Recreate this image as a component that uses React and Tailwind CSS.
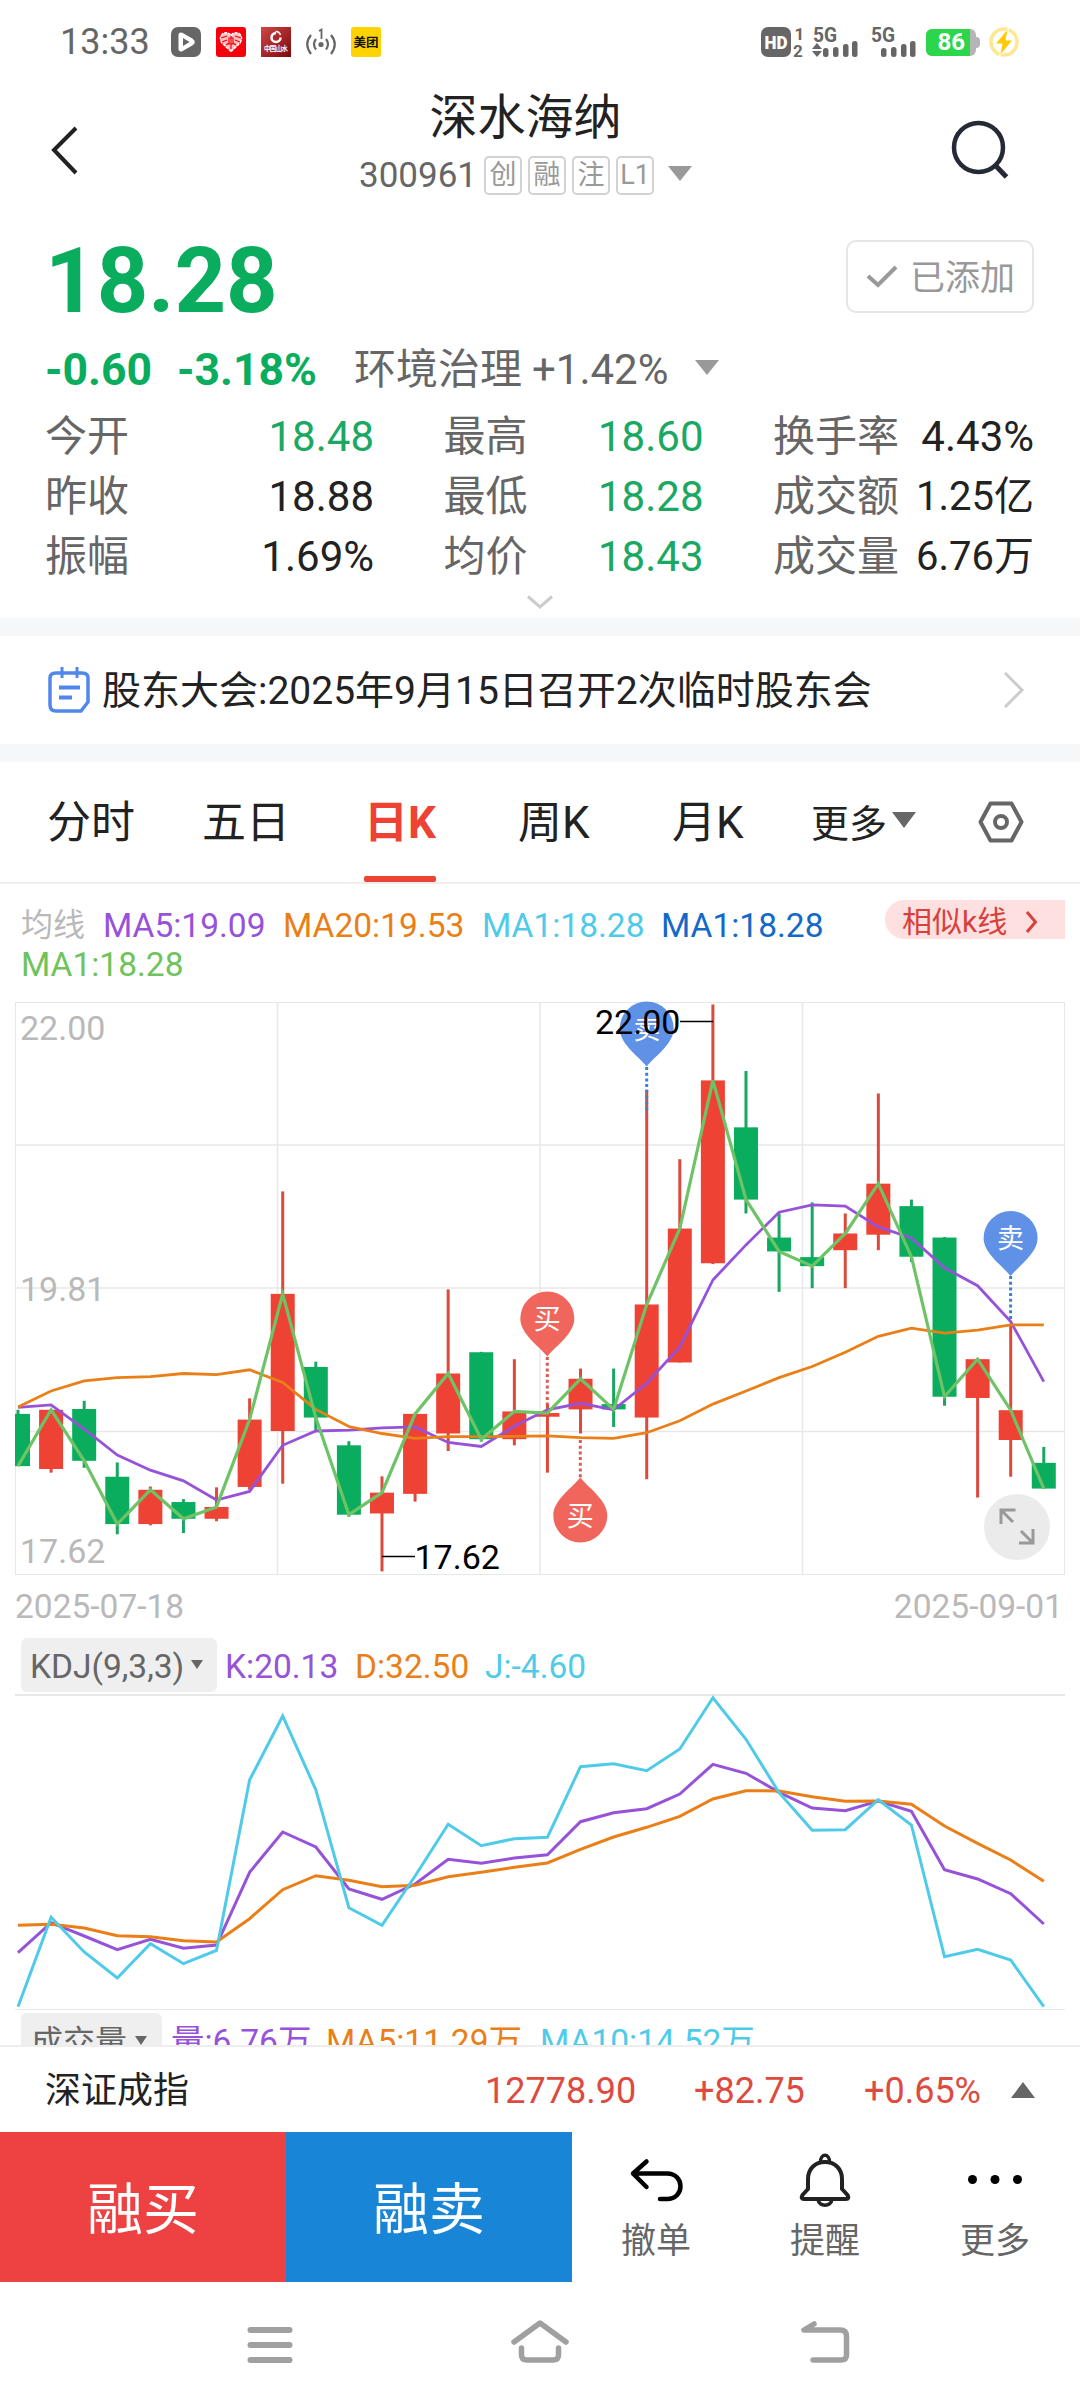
import React from "react";

const GREEN = "#09ad5d";
const RED = "#ee4234";
const PURPLE = "#9652d9";
const ORANGE = "#ea7f17";
const CYAN = "#4fcbe9";

// chart x position of the n-th trading day
const dayX = (i) => 18 + i * 33.09;

// price chart: [up, high, bodyTop, bodyBottom, low]
const candles = [
  [0, 1004, 1014, 1142, 1142],
  [1, 1004, 1004, 1149, 1158],
  [0, 982, 1002, 1129, 1146],
  [0, 1133, 1168, 1284, 1309],
  [1, 1192, 1200, 1284, 1287],
  [0, 1223, 1230, 1271, 1306],
  [1, 1194, 1242, 1271, 1277],
  [1, 976, 1028, 1193, 1200],
  [1, 469, 720, 1056, 1185],
  [0, 886, 899, 1023, 1056],
  [0, 1081, 1091, 1261, 1266],
  [1, 1167, 1207, 1258, 1400],
  [1, 1014, 1014, 1210, 1229],
  [1, 709, 915, 1062, 1105],
  [0, 862, 863, 1076, 1082],
  [1, 880, 1008, 1076, 1091],
  [1, 990, 1012, 1021, 1158],
  [1, 903, 928, 1003, 1062],
  [0, 903, 990, 1003, 1046],
  [1, 220, 746, 1023, 1174],
  [1, 390, 560, 888, 888],
  [1, 11, 197, 645, 647],
  [0, 174, 312, 489, 523],
  [0, 523, 582, 616, 715],
  [0, 496, 630, 652, 706],
  [1, 523, 572, 613, 706],
  [1, 229, 450, 575, 613],
  [0, 489, 505, 629, 642],
  [0, 581, 582, 972, 994],
  [1, 880, 880, 975, 1219],
  [1, 793, 1005, 1078, 1168],
  [0, 1095, 1134, 1197, 1197],
];

const ma5 = [
  998, 992, 1051, 1115, 1152, 1178, 1225, 1204, 1091, 1056, 1054, 1048, 1046, 1084, 1094, 1044,
  1004, 988, 1004, 939, 850, 686, 600, 520, 502, 505, 556, 583, 656, 700, 788, 935,
];

const ma20 = [
  997, 958, 933, 925, 923, 915, 918, 906, 937, 1003, 1045, 1062, 1074, 1070, 1070, 1069,
  1068, 1072, 1074, 1060, 1031, 990, 958, 925, 898, 863, 824, 804, 816, 809, 796, 796,
];

const kLine = [
  968, 878, 918, 959, 928, 955, 945, 727, 606, 651, 777, 808, 762, 688, 700, 684,
  674, 575, 548, 536, 492, 403, 430, 487, 534, 542, 513, 544, 719, 747, 791, 882,
];

const dLine = [
  886, 883, 894, 917, 920, 932, 936, 866, 779, 737, 751, 770, 766, 740, 727, 712,
  699, 658, 621, 592, 559, 507, 482, 483, 500, 514, 513, 523, 588, 640, 690, 754,
];

const jLine = [
  1130, 862, 966, 1044, 941, 1001, 961, 450, 258, 479, 833, 886, 738, 583, 647, 626,
  622, 410, 401, 422, 357, 203, 328, 488, 601, 599, 509, 585, 980, 958, 990, 1130,
];

const py = (v) => v / 2.45;
const ky = (v) => v / 3 - 64;

const toPoints = (values, scale) =>
  values.map((v, i) => `${dayX(i).toFixed(1)},${scale(v).toFixed(1)}`).join(" ");

function Triangle({ w, h, color, up, className }) {
  return (
    <svg width={w} height={h} viewBox="0 0 24 15" preserveAspectRatio="none" className={className}>
      <path d={up ? "M12 0L24 15H0Z" : "M0 0H24L12 15Z"} fill={color} />
    </svg>
  );
}

function Signal({ arrows }) {
  return (
    <svg width="46" height="30" viewBox="0 0 46 30" fill="#666" className="overflow-visible">
      <text x="0" y="14.500" fontSize="20" fontWeight="700" textLength="24" lengthAdjust="spacingAndGlyphs">
        5G
      </text>
      {arrows && <path d="M4 16L9 22H-1ZM4 30L9 24H-1Z" />}
      <rect x="10" y="21" width="5.500" height="9" rx="2.500" />
      <rect x="20" y="20" width="5.500" height="10" rx="2.500" />
      <rect x="30" y="17" width="5.500" height="13" rx="2.500" />
      <rect x="39" y="14" width="5.500" height="16" rx="2.500" />
    </svg>
  );
}

function StatusBar() {
  return (
    <div className="flex h-[84px] items-center justify-between pl-[60px] pr-[61px] text-[#666]">
      <div className="flex items-center">
        <span className="w-[111px] text-[36px] leading-[36px]">13:33</span>
        <div className="flex gap-[15px]">
          <svg width="30" height="30" viewBox="0 0 30 30">
            <rect width="30" height="30" rx="7" fill="#666" />
            <path
              d="M10 8L20.500 14Q22 15 20.500 16L10 22Z"
              fill="#fff"
              stroke="#fff"
              strokeWidth="5"
              strokeLinejoin="round"
            />
            <path d="M12 11L18.500 15L12 19Z" fill="#666" />
          </svg>
          <svg width="30" height="30" viewBox="0 0 30 30">
            <rect width="30" height="30" rx="3" fill="#f5000b" />
            <path
              d="M15 24.500L6 16Q2.500 10 7 6.500Q12 4.500 15 8.500Q18 4.500 23 6.500Q27.500 10 24 16Z"
              fill="#fff"
              fillOpacity="0.75"
              stroke="#fff"
              strokeWidth="1.500"
              strokeDasharray="3 1"
            />
            <path
              d="M5 11L11 9M6 15L11 13M19 9L25 11M19 13L24 15M10 18L13 16M20 18L17 16M13 11H17V17H13ZM15 9V22"
              stroke="#f5000b"
              strokeWidth="1.200"
              fill="none"
            />
          </svg>
          <svg width="30" height="30" viewBox="0 0 30 30">
            <defs>
              <linearGradient id="crimson" x1="0" y1="0" x2="1" y2="1">
                <stop offset="0" stopColor="#cf4747" />
                <stop offset="1" stopColor="#7d0809" />
              </linearGradient>
            </defs>
            <rect width="30" height="30" fill="url(#crimson)" />
            <path d="M15 6A4.500 4.500 0 1 0 19.500 10.500" fill="none" stroke="#fff" strokeWidth="2.500" />
            <path d="M14.500 4.500Q18 4 19.500 8" stroke="#fff" strokeWidth="1.500" fill="none" />
            <text x="3" y="23.500" fontSize="6.500" fontWeight="700" fill="#fff" textLength="24">
              中国山水
            </text>
          </svg>
          <svg width="30" height="30" viewBox="0 0 30 30" fill="none" stroke="#666" strokeWidth="2.200">
            <circle cx="15" cy="17.500" r="2.600" fill="#666" stroke="none" />
            <path d="M13 4L15.500 2.500V12" strokeWidth="1.800" />
            <path d="M10 12Q6 17 10 22.500M20 12Q24 17 20 22.500M5 8Q-2.500 17 5 27M25 8Q32.500 17 25 27" />
          </svg>
          <svg width="30" height="30" viewBox="0 0 30 30">
            <rect width="30" height="30" rx="3" fill="#ffd300" />
            <text x="2.500" y="19.500" fontSize="12.500" fontWeight="700" fill="#111" textLength="25">
              美团
            </text>
          </svg>
        </div>
      </div>

      <div className="flex items-center">
        <svg width="52" height="30" viewBox="0 0 52 30" fill="#666" className="overflow-visible">
          <rect width="30" height="30" rx="7" />
          <text x="3.500" y="21.500" fontSize="18" fontWeight="900" fill="#fff" textLength="23" lengthAdjust="spacingAndGlyphs">
            HD
          </text>
          <text x="33.500" y="12.500" fontSize="17" fontWeight="700">1</text>
          <text x="32" y="29.500" fontSize="17" fontWeight="700">2</text>
        </svg>
        <Signal arrows />
        <div className="w-[12px]" />
        <Signal />
        <div className="ml-[9px] flex items-center">
          <div className="h-[27px] w-[50px] overflow-hidden rounded-[6px] bg-[#b5b5b5]">
            <div className="flex h-full w-[44px] items-center justify-end bg-[#2bd64b] pr-[5px] text-[24px] font-bold leading-none text-white">
              86
            </div>
          </div>
          <div className="h-[11px] w-[4px] rounded-r-full bg-[#b5b5b5]" />
        </div>
        <svg width="30" height="30" viewBox="0 0 30 30" className="ml-[9px]">
          <circle cx="15" cy="15" r="13" fill="none" stroke="#ffe790" strokeWidth="3.500" />
          <path d="M19.500 1L6 17H13L10.500 29L24 13H17Z" fill="#ffcb05" stroke="#fff" strokeWidth="1" />
        </svg>
      </div>
    </div>
  );
}

function Header() {
  return (
    <div className="flex h-[132px] justify-between pl-[50px] pr-[69px]">
      <svg width="30" height="50" viewBox="0 0 30 50" className="mt-[41px]">
        <path d="M26 3L4 25L26 48" fill="none" stroke="#222" strokeWidth="4" />
      </svg>
      <div className="flex flex-col items-center pl-[22px]">
        <div className="mt-[6px] text-[48px] leading-[56px] text-[#222]">深水海纳</div>
        <div className="mt-[7px] flex h-[44px] items-center text-[#666]">
          <span className="w-[125px] text-[35px] leading-none">300961</span>
          <div className="flex gap-[6px] text-[27px] text-[#999]">
            {["创", "融", "注", "L1"].map((tag) => (
              <span
                key={tag}
                className="flex h-[39px] w-[38px] items-center justify-center rounded-[5px] border-2 border-[#d2d2d2] leading-none"
              >
                {tag}
              </span>
            ))}
          </div>
          <Triangle w={24} h={15} color="#999" className="mb-[4px] ml-[14px]" />
        </div>
      </div>
      <svg width="62" height="62" viewBox="0 0 62 62" className="mt-[35px]">
        <circle cx="29.500" cy="28.500" r="24.500" fill="none" stroke="#252a35" strokeWidth="4.500" />
        <path d="M46 46L57.500 58" stroke="#252a35" strokeWidth="5" />
      </svg>
    </div>
  );
}

const stats = [
  ["今开", "18.48", "text-[#1aa862]"],
  ["最高", "18.60", "text-[#1aa862]"],
  ["换手率", "4.43%", "text-[#222]"],
  ["昨收", "18.88", "text-[#222]"],
  ["最低", "18.28", "text-[#1aa862]"],
  ["成交额", "1.25亿", "text-[40px] text-[#222]"],
  ["振幅", "1.69%", "text-[#222]"],
  ["均价", "18.43", "text-[#1aa862]"],
  ["成交量", "6.76万", "text-[40px] text-[#222]"],
];

function Quote() {
  return (
    <div className="h-[402px] pl-[45px] pr-[46px] pt-[24px]">
      <div className="flex h-[73px] justify-between">
        <div className="mt-[-3px] text-[90px] font-bold leading-[90px] text-[#09ad5d]">18.28</div>
        <div className="flex h-[73px] w-[188px] items-center justify-end rounded-[10px] border-2 border-[#e6e6e6] pr-[17px] text-[35px] text-[#999]">
          <svg width="32" height="24" viewBox="0 0 32 24" className="mr-[12px]">
            <path d="M2 11L12 20L30 2" fill="none" stroke="#999" strokeWidth="4" />
          </svg>
          <span className="pt-[4px] leading-none">已添加</span>
        </div>
      </div>

      <div className="mt-[27px] flex h-[60px] items-center leading-none">
        <span className="w-[132px] text-[44.500px] font-bold text-[#09ad5d]">-0.60</span>
        <span className="w-[177px] text-[44.500px] font-bold text-[#09ad5d]">-3.18%</span>
        <span className="w-[178px] text-[42px] text-[#666]">环境治理</span>
        <span className="w-[163px] text-[42px] text-[#666]">+1.42%</span>
        <Triangle w={24} h={15} color="#999" className="mb-[5px]" />
      </div>

      <div className="mt-[7px] grid grid-cols-[329px_260px_261px] justify-between text-[42px]">
        {stats.map(([label, value, color]) => (
          <div key={label} className="flex h-[60px] items-center justify-between whitespace-nowrap leading-none">
            <span className="text-[#666]">{label}</span>
            <span className={color}>{value}</span>
          </div>
        ))}
      </div>

      <svg width="26" height="15" viewBox="0 0 26 15" className="mx-auto mt-[8px]">
        <path d="M1 1.500L13 12L25 1.500" fill="none" stroke="#ccc" strokeWidth="3" />
      </svg>
    </div>
  );
}

function Notice() {
  return (
    <div className="flex h-[144px] items-center border-y-[18px] border-[#f6f7f9] pl-[48px] pr-[55px]">
      <svg width="42" height="46" viewBox="0 0 42 46" fill="none" stroke="#5187ec" strokeWidth="4">
        <path d="M8 6H34Q40 6 40 11V35L33 44H8Q2 44 2 38V11Q2 6 8 6Z" strokeWidth="3.500" />
        <path d="M14 0V11M29 0V11" strokeWidth="3" />
        <path d="M11 20.500H32M11 30.500H24" />
      </svg>
      <span className="ml-[12px] flex-1 pt-[3px] text-[39px] leading-none text-[#222]">
        股东大会:2025年9月15日召开2次临时股东会
      </span>
      <svg width="22" height="36" viewBox="0 0 22 36">
        <path d="M2 1L19 18L2 35" fill="none" stroke="#ccc" strokeWidth="3" />
      </svg>
    </div>
  );
}

function PeriodTabs() {
  return (
    <div className="flex h-[122px] items-center border-b-2 border-[#eee] pl-[47px] text-[44px] leading-none text-[#222]">
      <span className="w-[155px] pt-[2px]">分时</span>
      <span className="w-[162px] pt-[2px]">五日</span>
      <div className="flex h-full w-[72px] flex-col items-center justify-between">
        <span className="pt-[39px] font-bold text-[#ee4234]">日K</span>
        <div className="h-[6px] w-[72px] rounded-[2px] bg-[#ee4234]" />
      </div>
      <span className="ml-[82px] w-[154px] pt-[2px]">周K</span>
      <span className="w-[139px] pt-[2px]">月K</span>
      <span className="w-[81px] pt-[3px] text-[38px]">更多</span>
      <Triangle w={24} h={16} color="#666" className="mb-[4px]" />
      <svg width="46" height="42" viewBox="0 0 46 42" fill="none" stroke="#666" strokeWidth="4" className="ml-[62px]">
        <path d="M12.500 2.500H33.500L43.500 21L33.500 39.500H12.500L2.500 21Z" strokeLinejoin="round" />
        <circle cx="23" cy="21" r="6" />
      </svg>
    </div>
  );
}

function MaLegend() {
  return (
    <div className="flex h-[116px] justify-between pl-[21px] pr-[15px] pt-[16px]">
      <div className="pt-[6px] text-[33.500px] leading-[39px]">
        <div className="flex">
          <span className="w-[82px] text-[32px] text-[#b9b9b9]">均线</span>
          <span className="w-[180px] text-[#9652d9]">MA5:19.09</span>
          <span className="w-[199px] text-[#ea7f17]">MA20:19.53</span>
          <span className="w-[179px] text-[#4fcbe9]">MA1:18.28</span>
          <span className="text-[#1468c8]">MA1:18.28</span>
        </div>
        <div className="text-[#6fc35c]">MA1:18.28</div>
      </div>
      <div className="flex h-[39px] w-[180px] items-center rounded-l-full bg-[#fee0e0] pl-[17px] text-[30px] leading-none text-[#d8403b]">
        <span className="pt-[4px]">相似k线</span>
        <svg width="13" height="22" viewBox="0 0 13 22" className="ml-[18px] mt-[4px]">
          <path d="M2 1L10.500 11L2 21" fill="none" stroke="#d8403b" strokeWidth="3" />
        </svg>
      </div>
    </div>
  );
}

function Pin({ x, tip, from, to, label, color, dots, flip }) {
  const cy = flip ? tip + 38 : tip - 38;
  return (
    <g>
      <path d={`M${x} ${from}V${to}`} stroke={dots} strokeWidth="3" strokeDasharray="3 2.700" />
      <path
        d="M-27 0A27 27 0 0 1 27 0C27 15 10 26 0 38C-10 26 -27 15 -27 0Z"
        transform={`translate(${x} ${cy})${flip ? " scale(1 -1)" : ""}`}
        fill={color}
        fillOpacity="0.95"
      />
      <text x={x} y={cy + 10} textAnchor="middle" fontSize="27" fill="#fff">
        {label}
      </text>
    </g>
  );
}

function PriceChart() {
  const close = candles.map(([up, , top, bottom]) => (up ? top : bottom));
  return (
    <svg width="1080" height="578" viewBox="0 0 1080 578" className="block">
      <clipPath id="plot">
        <rect x="15" y="0" width="1050" height="578" />
      </clipPath>
      <g stroke="#e8e8e8" strokeWidth="1.500" fill="none">
        <rect x="15.500" y="2.500" width="1049" height="572" strokeWidth="1" />
        <path d="M15 145H1065M15 288H1065M15 431.500H1065M277.500 3V574M540 3V574M802.500 3V574" />
      </g>

      <g fontSize="34" fill="#b9b9b9">
        <text x="20" y="40">22.00</text>
        <text x="20" y="301">19.81</text>
        <text x="20" y="563">17.62</text>
      </g>

      <g clipPath="url(#plot)">
        {candles.map(([up, high, top, bottom, low], i) => (
          <g key={i} fill={up ? RED : GREEN}>
            <rect x={dayX(i) - 1.5} y={py(high)} width="3" height={py(low - high)} fill={up ? "#dc4a3e" : "#1aa562"} />
            <rect x={dayX(i) - 12} y={py(top)} width="24" height={py(bottom - top)} />
          </g>
        ))}
        <g fill="none" strokeWidth="2.800">
          <polyline points={toPoints(ma5, py)} stroke={PURPLE} />
          <polyline points={toPoints(ma20, py)} stroke={ORANGE} />
          <polyline points={toPoints(close, py)} stroke="#6fc367" strokeWidth="3.200" />
        </g>
      </g>

      <Pin x={646.7} tip={66.5} from={67} to={113} label="卖" color="#568ce6" dots="#3d80cc" />
      <Pin x={1010.6} tip={276} from={276} to={320} label="卖" color="#568ce6" dots="#3d80cc" />
      <Pin x={547.3} tip={356.5} from={357} to={405} label="买" color="#ef5e54" dots="#d95b55" />
      <Pin x={580.3} tip={477.5} from={440} to={478} label="买" color="#ef5e54" dots="#d95b55" flip />

      <g fontSize="34" fill="#000">
        <text x="595" y="34">22.00</text>
        <text x="414.500" y="568.500">17.62</text>
        <path d="M680 21.500H713M382 556.500H415" stroke="#000" strokeWidth="1.500" />
      </g>

      <circle cx="1017" cy="527" r="33" fill="#ebebeb" />
      <path
        d="M1001 524V510H1015.500M1001.500 510.500L1013 522M1019 543H1033V529M1021 531L1032.500 542.500"
        fill="none"
        stroke="#999"
        strokeWidth="3"
      />
    </svg>
  );
}

function KdjChart() {
  return (
    <svg width="1080" height="316" viewBox="0 0 1080 316" className="block">
      <path d="M15 1H1065" stroke="#e8e8e8" strokeWidth="2" />
      <path d="M15 315.500H1065" stroke="#e8e8e8" strokeWidth="1" />
      <g fill="none" strokeWidth="3">
        <polyline points={toPoints(kLine, ky)} stroke={PURPLE} />
        <polyline points={toPoints(dLine, ky)} stroke={ORANGE} />
        <polyline points={toPoints(jLine, ky)} stroke={CYAN} />
      </g>
    </svg>
  );
}

function Indicators() {
  return (
    <div className="h-[408px] overflow-hidden">
      <div className="flex h-[57px] pl-[21px] text-[33.500px] leading-none">
        <div className="mt-[1px] flex h-[54px] w-[196px] items-center rounded-[6px] bg-[#efefef] pl-[9px] text-[#666]">
          <span className="w-[161px] pt-[3px]">KDJ(9,3,3)</span>
          <Triangle w={12} h={9} color="#666" className="mb-[2px]" />
        </div>
        <div className="flex h-[56px] items-center pl-[8px] pt-[4px]">
          <span className="w-[130px] text-[#9652d9]">K:20.13</span>
          <span className="w-[130px] text-[#ea7f17]">D:32.50</span>
          <span className="text-[#4fcbe9]">J:-4.60</span>
        </div>
      </div>
      <KdjChart />
      <div className="flex pl-[21px] pt-[3px] text-[33.500px] leading-none">
        <div className="flex h-[54px] w-[141px] shrink-0 items-center rounded-[6px] bg-[#efefef] pl-[10px] text-[#666]">
          <span className="w-[104px] pt-[3px] text-[32px]">成交量</span>
          <Triangle w={12} h={9} color="#666" />
        </div>
        <div className="flex h-[54px] items-center whitespace-nowrap pl-[9px] pt-[3px]">
          <span className="w-[155px] text-[#9652d9]">量:6.76万</span>
          <span className="w-[214px] text-[#ea7f17]">MA5:11.29万</span>
          <span className="text-[#4fcbe9]">MA10:14.52万</span>
        </div>
      </div>
    </div>
  );
}

function IndexBar() {
  return (
    <div className="flex h-[87px] items-center border-t-2 border-[#eee] pl-[45px] text-[36px] leading-none text-[#dd4a3f]">
      <span className="w-[440px] pt-[2px] text-[#222]">深证成指</span>
      <span className="w-[209px] pt-[3px]">12778.90</span>
      <span className="w-[170px] pt-[3px]">+82.75</span>
      <span className="w-[147px] pt-[3px]">+0.65%</span>
      <Triangle w={24} h={16} color="#666" up />
    </div>
  );
}

function ActionBar() {
  return (
    <div className="flex h-[150px] text-[35px] leading-none text-[#666]">
      <button className="w-[286px] bg-[#ee4242] pt-[5px] text-[56px] text-white">融买</button>
      <button className="w-[286px] bg-[#1985d6] pt-[5px] text-[56px] text-white">融卖</button>
      <div className="flex w-[168px] flex-col items-center">
        <svg width="54" height="54" viewBox="0 0 54 54" fill="none" stroke="#000" strokeWidth="4.500" className="mt-[21px]" strokeLinecap="round" strokeLinejoin="round">
          <path d="M17.500 8.500L4 20.500L17.500 34M4 20.500H38C56 20.500 56 46 38 46H31" />
        </svg>
        <span className="mt-[17px]">撤单</span>
      </div>
      <div className="flex w-[170px] flex-col items-center">
        <svg width="54" height="54" viewBox="0 0 54 54" fill="none" stroke="#222" strokeWidth="4" className="mt-[21px]" strokeLinejoin="round">
          <path d="M27 9C17 9 10 16 10 26V36L4.500 42Q2.500 46 6 46H48Q51.500 46 49.500 42L44 36V26C44 16 37 9 27 9Z" />
          <path d="M22.500 9C22.500 0 31.500 0 31.500 9M20 46.500C21 54 33 54 34 46.500" strokeWidth="3.500" />
        </svg>
        <span className="mt-[17px]">提醒</span>
      </div>
      <div className="flex w-[170px] flex-col items-center">
        <svg width="54" height="54" viewBox="0 0 54 54" className="mt-[21px]">
          <circle cx="4.500" cy="26.500" r="4.500" />
          <circle cx="27" cy="26.500" r="4.500" />
          <circle cx="49.500" cy="26.500" r="4.500" />
        </svg>
        <span className="mt-[17px]">更多</span>
      </div>
    </div>
  );
}

function SystemNav() {
  return (
    <div className="flex h-[126px] items-start pl-[247px] pt-[37px]">
      <svg width="46" height="46" viewBox="0 0 46 46" fill="#a0a0a0">
        <rect x="0.500" y="8" width="45" height="6" rx="3" />
        <rect x="0.500" y="23" width="45" height="6" rx="3" />
        <rect x="0.500" y="38" width="45" height="6" rx="3" />
      </svg>
      <svg width="60" height="46" viewBox="0 0 60 46" fill="none" stroke="#a0a0a0" strokeWidth="5.500" strokeLinecap="round" strokeLinejoin="round" className="ml-[217px]">
        <path d="M4 23L30 4L56 23" />
        <path d="M11.500 29V36Q11.500 41 17 41H43Q48.500 41 48.500 36V29" />
      </svg>
      <svg width="50" height="46" viewBox="0 0 50 46" fill="none" stroke="#a0a0a0" strokeWidth="5.500" strokeLinecap="round" strokeLinejoin="round" className="ml-[230px]">
        <path d="M14 5L4 11H40Q46.500 11 46.500 17V36Q46.500 41 41 41H13" />
      </svg>
    </div>
  );
}

function App() {
  return (
    <div className="h-[2408px] w-[1080px] overflow-hidden bg-white font-[Roboto,'Noto_Sans_CJK_SC',sans-serif]">
      <StatusBar />
      <Header />
      <Quote />
      <Notice />
      <PeriodTabs />
      <MaLegend />
      <PriceChart />

      {/* date range */}
      <div className="flex h-[59px] items-center justify-between pb-[2px] pl-[15px] pr-[17px] text-[33.500px] leading-none text-[#b9b9b9]">
        <span>2025-07-18</span>
        <span>2025-09-01</span>
      </div>

      <Indicators />
      <IndexBar />
      <ActionBar />
      <SystemNav />
    </div>
  );
}

export default App;
